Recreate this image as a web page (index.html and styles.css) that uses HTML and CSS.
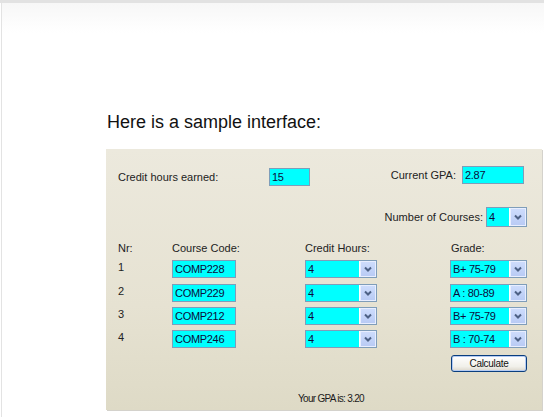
FILE: index.html
```html
<!DOCTYPE html>
<html lang="en">
<head>
<meta charset="utf-8">
<title>GPA Calculator sample</title>
<link rel="stylesheet" href="styles.css">
</head>
<body>
<div class="topbar"></div>
<div class="page">
  <h1 class="heading">Here is a sample interface:</h1>
  <div class="panel">
    <div class="row-a">
      <span class="lbl lbl-earned">Credit hours earned:</span>
      <input class="field f-earned" value="15">
      <span class="spacer"></span>
      <span class="lbl">Current GPA:</span>
      <input class="field f-gpa" value="2.87">
    </div>
    <div class="row-b">
      <span class="lbl">Number of Courses:</span>
      <div class="combo c-num"><span class="val">4</span><span class="arrow"><svg viewBox="0 0 14 16" width="14" height="16"><polyline points="4,6.5 7,9.5 10,6.5" fill="none" stroke="#4d6185" stroke-width="2"/></svg></span></div>
    </div>
    <div class="grid">
      <span class="hd">Nr:</span>
      <span class="hd">Course Code:</span>
      <span class="hd">Credit Hours:</span>
      <span class="hd">Grade:</span>

      <span class="nr">1</span>
      <input class="field f-code" value="COMP228">
      <div class="combo c-hours"><span class="val">4</span><span class="arrow"><svg viewBox="0 0 14 16" width="14" height="16"><polyline points="4,6.5 7,9.5 10,6.5" fill="none" stroke="#4d6185" stroke-width="2"/></svg></span></div>
      <div class="combo c-grade"><span class="val">B+ 75-79</span><span class="arrow"><svg viewBox="0 0 14 16" width="14" height="16"><polyline points="4,6.5 7,9.5 10,6.5" fill="none" stroke="#4d6185" stroke-width="2"/></svg></span></div>

      <span class="nr">2</span>
      <input class="field f-code" value="COMP229">
      <div class="combo c-hours"><span class="val">4</span><span class="arrow"><svg viewBox="0 0 14 16" width="14" height="16"><polyline points="4,6.5 7,9.5 10,6.5" fill="none" stroke="#4d6185" stroke-width="2"/></svg></span></div>
      <div class="combo c-grade"><span class="val">A : 80-89</span><span class="arrow"><svg viewBox="0 0 14 16" width="14" height="16"><polyline points="4,6.5 7,9.5 10,6.5" fill="none" stroke="#4d6185" stroke-width="2"/></svg></span></div>

      <span class="nr">3</span>
      <input class="field f-code" value="COMP212">
      <div class="combo c-hours"><span class="val">4</span><span class="arrow"><svg viewBox="0 0 14 16" width="14" height="16"><polyline points="4,6.5 7,9.5 10,6.5" fill="none" stroke="#4d6185" stroke-width="2"/></svg></span></div>
      <div class="combo c-grade"><span class="val">B+ 75-79</span><span class="arrow"><svg viewBox="0 0 14 16" width="14" height="16"><polyline points="4,6.5 7,9.5 10,6.5" fill="none" stroke="#4d6185" stroke-width="2"/></svg></span></div>

      <span class="nr">4</span>
      <input class="field f-code" value="COMP246">
      <div class="combo c-hours"><span class="val">4</span><span class="arrow"><svg viewBox="0 0 14 16" width="14" height="16"><polyline points="4,6.5 7,9.5 10,6.5" fill="none" stroke="#4d6185" stroke-width="2"/></svg></span></div>
      <div class="combo c-grade"><span class="val">B : 70-74</span><span class="arrow"><svg viewBox="0 0 14 16" width="14" height="16"><polyline points="4,6.5 7,9.5 10,6.5" fill="none" stroke="#4d6185" stroke-width="2"/></svg></span></div>
    </div>
    <div class="row-calc">
      <button class="btn" type="button">Calculate</button>
    </div>
    <p class="result">Your GPA is: 3.20</p>
  </div>
</div>
</body>
</html>
```
FILE: styles.css
```css
html, body {
  margin: 0;
  padding: 0;
  background: #ffffff;
}
body {
  width: 544px;
  height: 417px;
  overflow: hidden;
  font-family: "Liberation Sans", Arial, sans-serif;
}
.topbar {
  height: 3px;
  background: #e2e2e2;
}
.page {
  margin-left: 1px;
  border-left: 1px solid #e3e3e3;
  height: 414px;
  box-sizing: border-box;
  padding: 108px 0 0 104px;
  background: linear-gradient(#f7f7f7, #ffffff 30px);
}
.heading {
  margin: 0 0 0 1px;
  font-size: 18px;
  line-height: 22px;
  font-weight: normal;
  color: #111111;
}
.panel {
  margin-top: 16px;
  width: 436px;
  height: 261px;
  box-sizing: border-box;
  padding: 17px 15px 0 12px;
  background: linear-gradient(#ece9dd, #e6e2d2 60%, #dedac6);
  box-shadow: 1px 1px 0 #d4d2cc;
  font-size: 11px;
  color: #222222;
}
.lbl {
  line-height: 13px;
}
.row-a {
  display: flex;
  align-items: center;
  height: 19px;
}
.lbl-earned {
  width: 151px;
  margin-top: 4px;
}
.spacer {
  flex: 1;
}
.field {
  box-sizing: border-box;
  height: 18px;
  margin: 0;
  padding: 0 2px;
  border: 1px solid #7f9db9;
  background: #00ffff;
  font-family: "Liberation Sans", Arial, sans-serif;
  font-size: 11px;
  letter-spacing: -0.3px;
  color: #0c0c3a;
  outline: none;
}
.f-earned {
  width: 41px;
  margin-top: 3px;
}
.f-gpa {
  width: 62px;
  margin-left: 6px;
  margin-right: 3px;
  margin-top: -1px;
}
.row-b {
  display: flex;
  justify-content: flex-end;
  align-items: center;
  margin-top: 22px;
  height: 20px;
  gap: 3px;
}
.combo {
  box-sizing: border-box;
  display: flex;
  height: 18px;
  border: 1px solid #7f9db9;
  background: #ffffff;
}
.combo .val {
  flex: 1;
  background: #00ffff;
  padding-left: 2px;
  line-height: 16px;
  letter-spacing: -0.3px;
  color: #0c0c3a;
  white-space: nowrap;
  overflow: hidden;
}
.combo .arrow {
  box-sizing: border-box;
  width: 16px;
  margin-left: 1px;
  border: 1px solid #e8eeff;
  background: linear-gradient(#cddcfc, #b9cbf5);
  display: flex;
  align-items: center;
  justify-content: center;
}
.combo .arrow svg {
  display: block;
}
.c-num {
  width: 41px;
  height: 20px;
}
.c-num .val {
  line-height: 18px;
}
.grid {
  display: grid;
  grid-template-columns: 54px 133px 146px 76px;
  grid-template-rows: 13px;
  grid-auto-rows: 18px;
  row-gap: 7px 5.3px;
  row-gap: 5.3px;
  margin-top: 15px;
}
.hd {
  line-height: 13px;
  margin-bottom: -1.7px;
}
.nr {
  line-height: 15px;
}
.f-code {
  width: 64px;
}
.c-hours {
  width: 72px;
}
.c-grade {
  width: 77px;
  margin-left: -1px;
}
.row-calc {
  display: flex;
  justify-content: flex-end;
  margin-top: 7px;
}
.btn {
  box-sizing: border-box;
  width: 76px;
  height: 17px;
  margin: 0;
  padding: 0;
  border: 1px solid #0a3e7e;
  border-radius: 3px;
  background: linear-gradient(#ffffff, #f1f0ea 70%, #dcd7cb);
  box-shadow: inset 0 0 0 1px #b4cbf3;
  font-family: "Liberation Sans", Arial, sans-serif;
  font-size: 10px;
  letter-spacing: -0.3px;
  color: #111111;
  line-height: 15px;
}
.result {
  margin: 21px 0 0 0;
  padding-left: 180px;
  font-size: 10px;
  line-height: 12px;
  letter-spacing: -0.7px;
  color: #1a1a1a;
}
```
